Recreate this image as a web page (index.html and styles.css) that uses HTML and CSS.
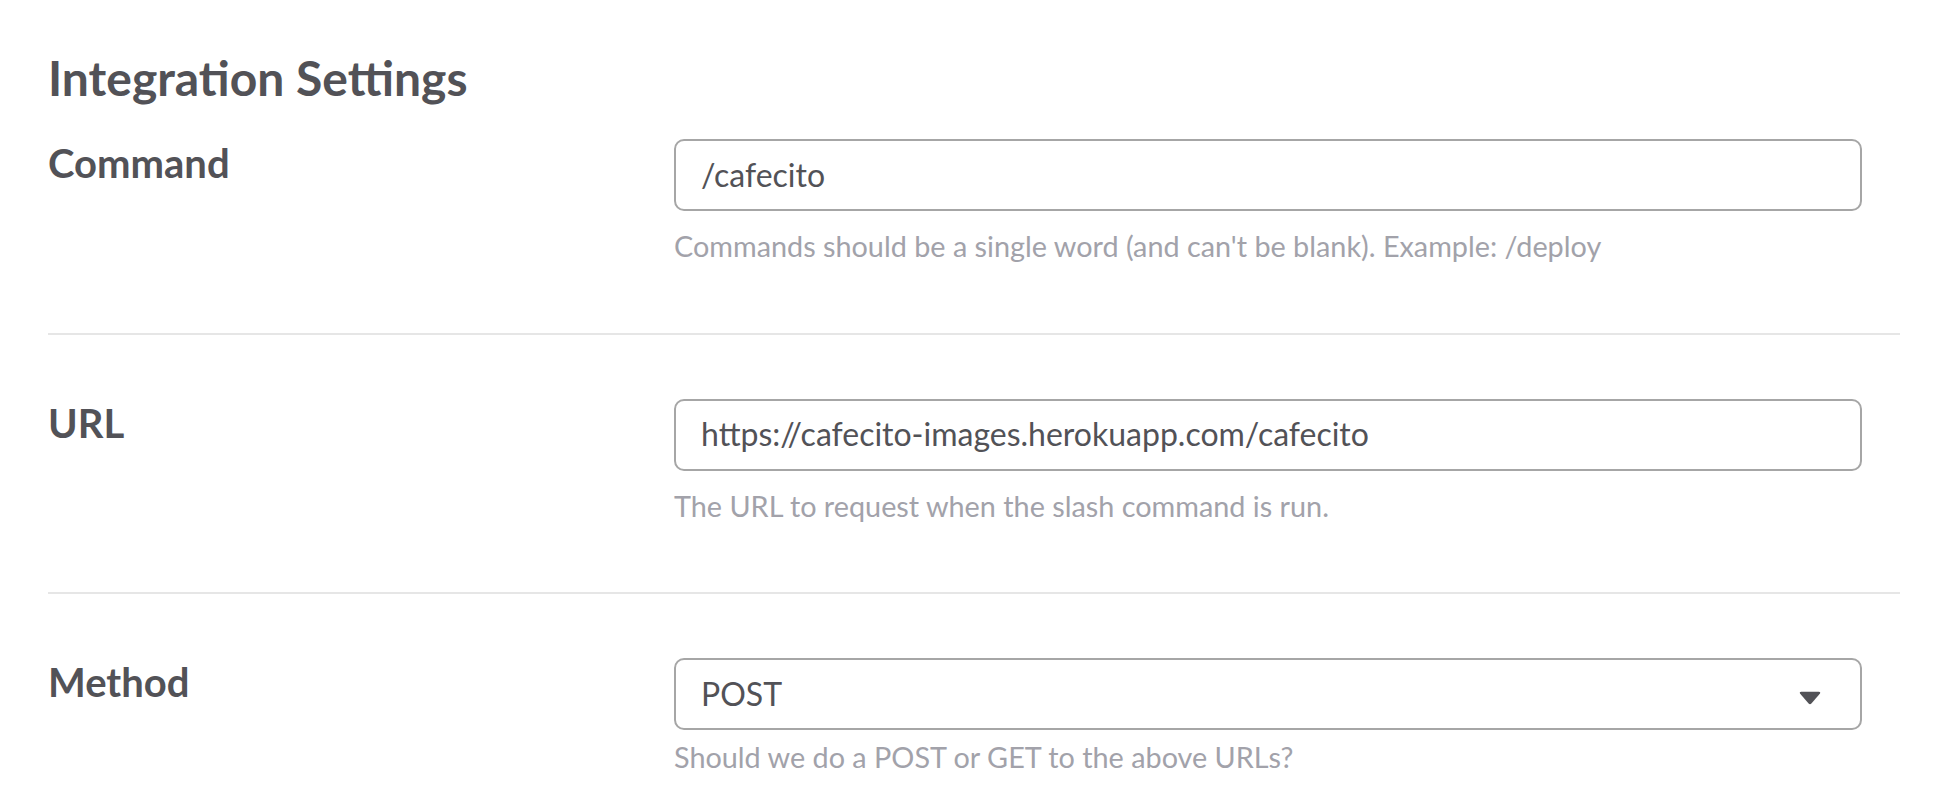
FILE: index.html
```html
<!DOCTYPE html>
<html lang="en">
<head>
<meta charset="utf-8">
<title>Integration Settings</title>
<link rel="stylesheet" href="styles.css">
</head>
<body>
<main class="page">
  <h1 class="title">Integration Settings</h1>

  <section class="field">
    <label class="field-label" for="command">Command</label>
    <div class="field-control">
      <input class="text-input" id="command" type="text" value="/cafecito">
      <p class="help">Commands should be a single word (and can't be blank). Example: /deploy</p>
    </div>
  </section>

  <section class="field">
    <label class="field-label" for="url">URL</label>
    <div class="field-control">
      <input class="text-input" id="url" type="text" value="https://cafecito-images.herokuapp.com/cafecito">
      <p class="help">The URL to request when the slash command is run.</p>
    </div>
  </section>

  <section class="field field-last">
    <label class="field-label">Method</label>
    <div class="field-control">
      <div class="select">
        <span class="select-value">POST</span>
        <svg class="select-caret" width="22" height="14" viewBox="0 0 22 14" aria-hidden="true">
          <path d="M2.2 0.8 H19.8 Q22 0.8 20.8 2.8 L12.4 12.6 Q11 14 9.6 12.6 L1.2 2.8 Q0 0.8 2.2 0.8 Z" fill="#525257"/>
        </svg>
      </div>
      <p class="help help-tight">Should we do a POST or GET to the above URLs?</p>
    </div>
  </section>
</main>
</body>
</html>
```

FILE: styles.css
```css
* {
  box-sizing: border-box;
}

html, body {
  margin: 0;
  padding: 0;
  background: #ffffff;
}

body {
  font-family: Lato, "Open Sans", "Liberation Sans", sans-serif;
  color: #525257;
}

.page {
  padding: 49px 46px 0 48px;
}

.title {
  margin: 0 0 32px 0;
  font-size: 48px;
  line-height: 58px;
  font-weight: 700;
  color: #525257;
}

.field {
  display: grid;
  grid-template-columns: 626px 1188px;
  align-items: start;
  padding: 64px 0 69px 0;
  border-bottom: 2px solid #e6e6e6;
}

.field:first-of-type {
  padding-top: 0;
}

.field-last {
  border-bottom: none;
}

.field-label {
  font-size: 40px;
  line-height: 1.2;
  font-weight: 700;
  color: #525257;
}

.field-control {
  display: flex;
  flex-direction: column;
}

.text-input,
.select {
  width: 100%;
  height: 72px;
  border: 2px solid #a6a6a6;
  border-radius: 10px;
  background: #ffffff;
  padding: 0 39px 2px 25px;
  font-family: Lato, "Open Sans", "Liberation Sans", sans-serif;
  font-size: 32px;
  color: #525257;
  outline: none;
  margin: 0;
}

.select {
  display: flex;
  align-items: center;
  justify-content: space-between;
}

.select-caret {
  margin-top: 10px;
  flex: none;
}

.help {
  margin: 18px 0 0 0;
  font-size: 28.8px;
  line-height: 1.2;
  color: #a2a2aa;
}

.help-tight {
  margin-top: 10px;
}
```
